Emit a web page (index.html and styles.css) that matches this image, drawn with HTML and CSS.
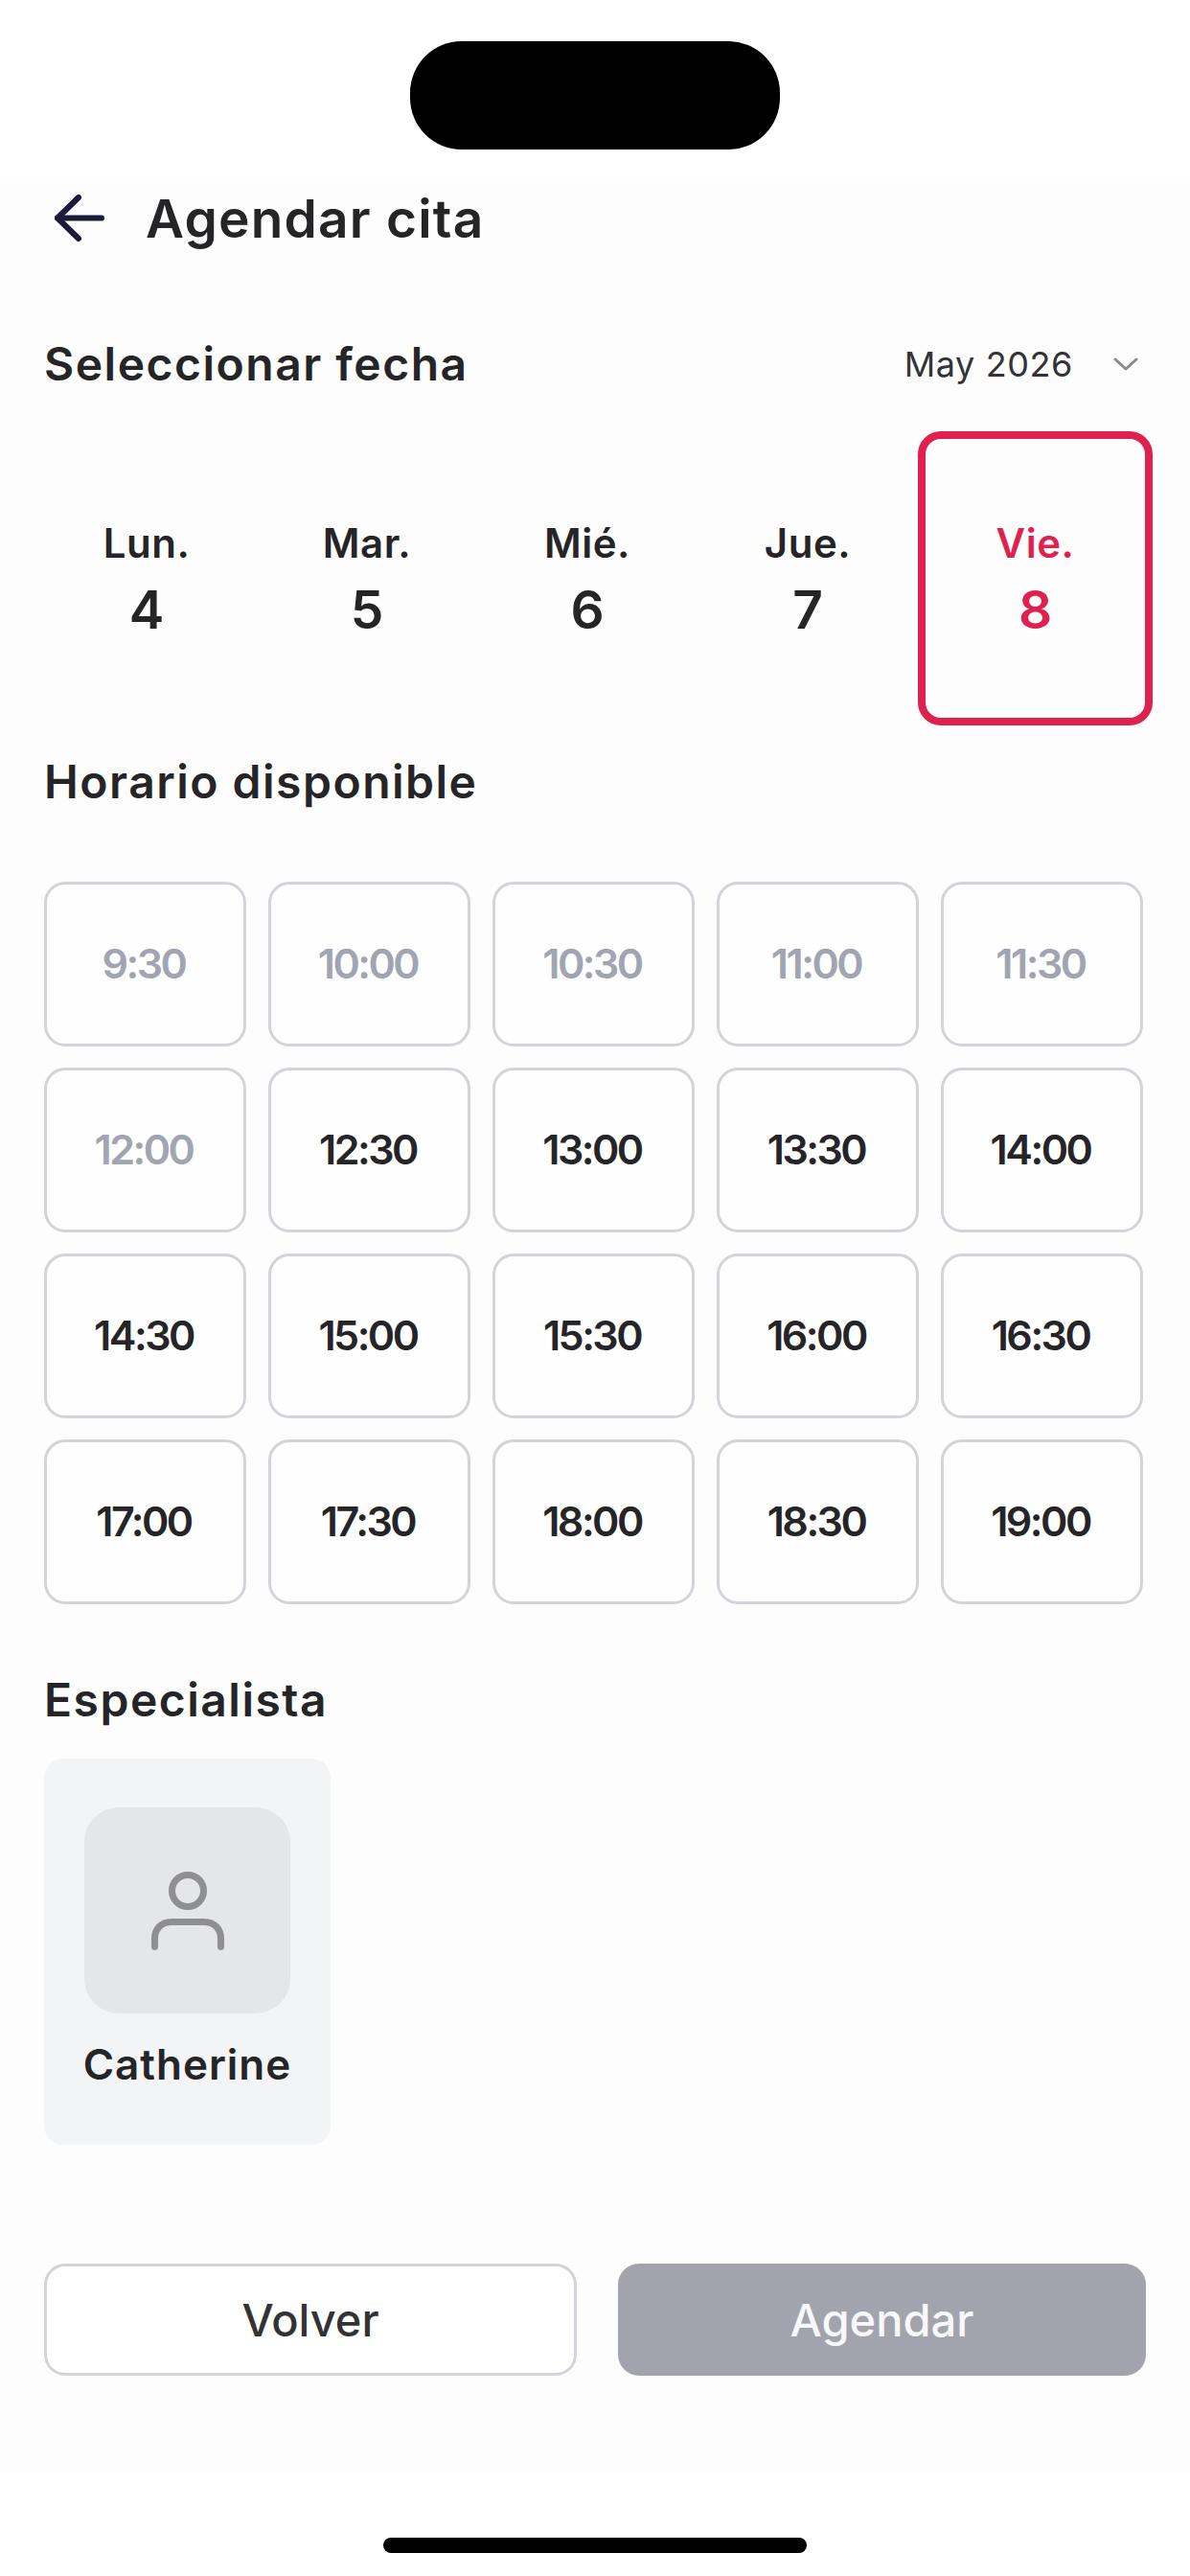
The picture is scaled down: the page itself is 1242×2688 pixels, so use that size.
FILE: index.html
```html
<!DOCTYPE html>
<html lang="es">
<head>
    <meta charset="UTF-8">
    <meta name="viewport" content="width=device-width, initial-scale=1.0">
    <title>Agendar cita</title>
    <link rel="stylesheet" href="styles.css">
</head>
<body>

    <!-- Status area -->
    <div class="status-area">
        <div class="notch"></div>
    </div>

    <div class="content">
        <!-- Header -->
        <div class="page-header">
            <svg class="back-icon" viewBox="0 0 52 50" fill="none" stroke="#1c1a3a" stroke-width="6" stroke-linecap="round" stroke-linejoin="round">
                <path d="M3 24.5H49"/>
                <path d="M25 3L3 24.5L25 46"/>
            </svg>
            <h1>Agendar cita</h1>
        </div>

        <!-- Date -->
        <div class="date-header">
            <h2>Seleccionar fecha</h2>
            <div class="month-picker">
                <span>May 2026</span>
                <svg class="chevron" viewBox="0 0 26 14" fill="none" stroke="#8a8a8e" stroke-width="3" stroke-linecap="round" stroke-linejoin="round">
                    <path d="M2 2L13 12L24 2"/>
                </svg>
            </div>
        </div>

        <div class="day-row">
            <div class="day"><span class="day-name">Lun.</span><span class="day-num">4</span></div>
            <div class="day"><span class="day-name">Mar.</span><span class="day-num">5</span></div>
            <div class="day"><span class="day-name">Mié.</span><span class="day-num">6</span></div>
            <div class="day"><span class="day-name">Jue.</span><span class="day-num">7</span></div>
            <div class="day selected"><span class="day-name">Vie.</span><span class="day-num">8</span></div>
        </div>

        <!-- Time slots -->
        <h2 class="slots-title">Horario disponible</h2>
        <div class="slots">
            <div class="slot off">9:30</div>
            <div class="slot off">10:00</div>
            <div class="slot off">10:30</div>
            <div class="slot off">11:00</div>
            <div class="slot off">11:30</div>
            <div class="slot off">12:00</div>
            <div class="slot">12:30</div>
            <div class="slot">13:00</div>
            <div class="slot">13:30</div>
            <div class="slot">14:00</div>
            <div class="slot">14:30</div>
            <div class="slot">15:00</div>
            <div class="slot">15:30</div>
            <div class="slot">16:00</div>
            <div class="slot">16:30</div>
            <div class="slot">17:00</div>
            <div class="slot">17:30</div>
            <div class="slot">18:00</div>
            <div class="slot">18:30</div>
            <div class="slot">19:00</div>
        </div>

        <!-- Specialist -->
        <h2 class="specialist-title">Especialista</h2>
        <div class="specialist-card">
            <div class="avatar">
                <svg class="avatar-icon" viewBox="0 0 76 82" fill="none" stroke="#8e8e93" stroke-width="7" stroke-linecap="round">
                    <circle cx="38" cy="20" r="16.5"/>
                    <path d="M3.5 78.5V70C3.5 60 10 52.5 21 52.5H55C66 52.5 72.5 60 72.5 70V78.5"/>
                </svg>
            </div>
            <div class="specialist-name">Catherine</div>
        </div>

        <!-- Actions -->
        <div class="actions">
            <button class="btn btn-back">Volver</button>
            <button class="btn btn-submit">Agendar</button>
        </div>
    </div>

    <div class="home-area">
        <div class="home-bar"></div>
    </div>

</body>
</html>
```

FILE: styles.css
```css
* {
    box-sizing: border-box;
}

body {
    font-family: 'Inter', 'Liberation Sans', sans-serif;
    margin: 0;
    padding: 0;
    width: 1242px;
    height: 2688px;
    background: #ffffff;
    color: #252528;
    overflow: hidden;
}

h1,
h2 {
    margin: 0;
    font-weight: 600;
}

.status-area {
    height: 190px;
    padding-top: 43px;
    display: flex;
    justify-content: center;
}

.notch {
    width: 386px;
    height: 113px;
    background: #000000;
    border-radius: 54px;
}

.content {
    height: 2390px;
    padding: 0 46px;
    background: #fdfdfd;
}

.page-header {
    display: flex;
    align-items: center;
    height: 76px;
    padding-left: 11px;
}

.back-icon {
    width: 52px;
    height: 50px;
    margin-right: 43px;
}

.page-header h1 {
    font-size: 55px;
    letter-spacing: 1.2px;
}

.date-header {
    display: flex;
    align-items: center;
    justify-content: space-between;
    height: 60px;
    margin-top: 84px;
}

.date-header h2,
.slots-title,
.specialist-title {
    font-size: 48px;
    line-height: 60px;
    letter-spacing: 1.5px;
}

.month-picker {
    display: flex;
    align-items: center;
    gap: 42px;
    padding-right: 8px;
    font-size: 36px;
    letter-spacing: 0.6px;
    color: #333336;
}

.chevron {
    width: 26px;
    height: 14px;
}

.day-row {
    display: grid;
    grid-template-columns: repeat(4, 230px) 245px;
    height: 307px;
    margin-top: 40px;
    margin-left: -8px;
}

.day {
    display: flex;
    flex-direction: column;
    align-items: center;
    padding-top: 92px;
}

.day-name {
    font-size: 42px;
    font-weight: 600;
    line-height: 50px;
    letter-spacing: 0.5px;
}

.day-num {
    font-size: 55px;
    font-weight: 600;
    line-height: 66px;
    margin-top: 11px;
}

.day.selected {
    color: #e0214f;
    border: 8px solid #e0214f;
    border-radius: 24px;
    padding-top: 84px;
}

.slots-title {
    margin-top: 29px;
}

.slots {
    display: grid;
    grid-template-columns: repeat(5, 211px);
    grid-auto-rows: 172px;
    gap: 22px 23px;
    margin-top: 74px;
}

.slot {
    display: flex;
    align-items: center;
    justify-content: center;
    padding: 0 3px 2px 0;
    background: #fefefe;
    border: 3px solid #d2d4da;
    border-radius: 22px;
    font-size: 43px;
    font-weight: 600;
    letter-spacing: -2.5px;
}

.slot.off {
    color: #a0a5b1;
}

.specialist-title {
    margin-top: 70px;
}

.specialist-card {
    display: flex;
    flex-direction: column;
    align-items: center;
    width: 299px;
    height: 403px;
    margin-top: 31px;
    padding-top: 51px;
    background: #f3f4f6;
    border-radius: 20px;
}

.avatar {
    display: flex;
    align-items: center;
    justify-content: center;
    width: 215px;
    height: 215px;
    background: #e5e6ea;
    border-radius: 36px;
}

.avatar-icon {
    width: 76px;
    height: 82px;
}

.specialist-name {
    margin-top: 23px;
    font-size: 44px;
    font-weight: 600;
    line-height: 60px;
    letter-spacing: 1px;
    white-space: nowrap;
}

.actions {
    display: flex;
    gap: 43px;
    width: 1150px;
    margin-top: 124px;
}

.btn {
    height: 117px;
    border-radius: 22px;
    font-family: inherit;
    font-size: 47px;
    font-weight: 500;
}

.btn-back {
    width: 556px;
    background: #ffffff;
    border: 3px solid #d2d4da;
    color: #333336;
}

.btn-submit {
    width: 551px;
    background: #a3a3ad;
    border: none;
    color: #f8f8fa;
}

.home-area {
    display: flex;
    justify-content: center;
    padding-top: 68px;
}

.home-bar {
    width: 442px;
    height: 16px;
    background: #000000;
    border-radius: 8px;
}
```
